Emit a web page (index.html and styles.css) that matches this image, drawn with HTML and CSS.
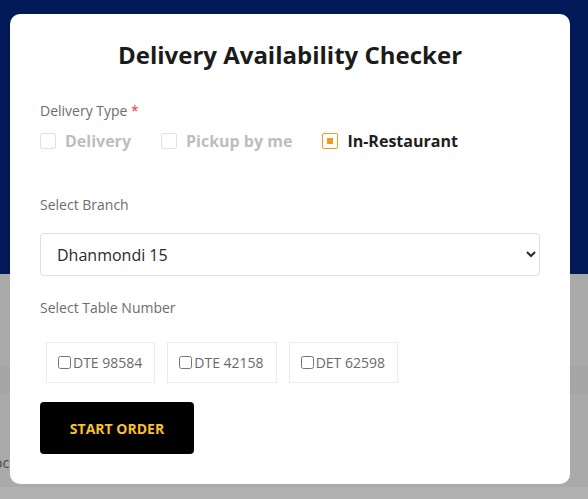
FILE: index.html
```html
<!DOCTYPE html>
<html lang="en">
<head>
  <meta charset="UTF-8">
  <meta name="viewport" content="width=device-width, initial-scale=1.0">
  <title>Delivery Availability Checker</title>
  <link rel="stylesheet" href="styles.css">
</head>
<body>

  <!-- Page behind the overlay -->
  <div class="page">
    <div class="page-header"></div>
    <div class="page-band"></div>
    <div class="page-band dark"></div>
    <div class="page-band text-band"><span class="page-text">oc</span></div>
    <div class="page-band light"></div>
  </div>

  <!-- Modal -->
  <div class="modal">
    <h2 class="modal-title">Delivery Availability Checker</h2>

    <div class="field-label">Delivery Type <span class="required">*</span></div>
    <div class="type-row">
      <label class="type-option">
        <span class="type-box"></span>
        <span>Delivery</span>
      </label>
      <label class="type-option">
        <span class="type-box"></span>
        <span>Pickup by me</span>
      </label>
      <label class="type-option active">
        <span class="type-box"></span>
        <span>In-Restaurant</span>
      </label>
    </div>

    <div class="field-label branch-label">Select Branch</div>
    <select class="branch-select">
      <option>Dhanmondi 15</option>
      <option>Gulshan 2</option>
      <option>Uttara</option>
    </select>

    <div class="field-label table-label">Select Table Number</div>
    <div class="table-list">
      <label class="table-item"><input type="checkbox">DTE 98584</label>
      <label class="table-item"><input type="checkbox">DTE 42158</label>
      <label class="table-item"><input type="checkbox">DET 62598</label>
    </div>

    <button class="start-btn">START ORDER</button>
  </div>

</body>
</html>
```

FILE: styles.css
```css
/* Base */
body {
  margin: 0;
  font-family: "Open Sans", "Liberation Sans", sans-serif;
  background-color: #a9a9a9;
}

/* Page behind the overlay */
.page {
  height: 499px;
  overflow: hidden;
}

.page-header {
  height: 274px;
  background-color: #011a57;
}

.page-band {
  height: 92px;
  background-color: #aaaaaa;
}

.page-band.dark {
  height: 28px;
  background-color: #a6a6a6;
}

.page-band.text-band {
  height: 93px;
  display: flex;
  align-items: flex-end;
}

.page-band.light {
  height: 12px;
  background-color: #b0b0b0;
}

.page-text {
  margin-left: -6px;
  margin-bottom: 14px;
  font-size: 14px;
  line-height: 20px;
  color: #4a4a4a;
}

/* Modal */
.modal {
  position: absolute;
  top: 14px;
  left: 10px;
  width: 500px;
  height: 445px;
  padding: 25px 30px 0;
  background-color: #fff;
  border-radius: 10px;
}

.modal-title {
  margin: 0 0 30px;
  text-align: center;
  font-size: 24px;
  line-height: 32px;
  font-weight: 700;
  color: #1b1b1b;
}

.field-label {
  font-size: 14px;
  line-height: 20px;
  color: #6d6d6d;
}

.required {
  color: #f03c3c;
}

/* Delivery type options */
.type-row {
  display: flex;
  gap: 30px;
  margin-top: 8px;
}

.type-option {
  display: flex;
  align-items: center;
  gap: 9px;
  font-size: 16px;
  line-height: 24px;
  font-weight: 700;
  color: #bdbdbd;
  cursor: pointer;
}

.type-box {
  width: 14px;
  height: 14px;
  border: 1px solid #e2e2e2;
  border-radius: 2px;
  display: flex;
  align-items: center;
  justify-content: center;
}

.type-option.active {
  color: #1e1e1e;
}

.type-option.active .type-box {
  border-color: #f39a1e;
}

.type-option.active .type-box::after {
  content: "";
  width: 6px;
  height: 6px;
  background-color: #f39a1e;
}

/* Branch select */
.branch-label {
  margin-top: 42px;
}

.branch-select {
  display: block;
  width: 500px;
  height: 43px;
  margin-top: 18px;
  padding: 0 10px 0 12px;
  border: 1px solid #dedede;
  border-radius: 4px;
  background-color: #fff;
  font-family: "Open Sans", "Liberation Sans", sans-serif;
  font-size: 16px;
  color: #2a2a2a;
}

/* Table numbers */
.table-label {
  margin-top: 22px;
}

.table-list {
  display: flex;
  margin-top: 18px;
}

.table-item {
  box-sizing: border-box;
  height: 41px;
  margin: 6px;
  padding: 0 12px 0 8px;
  border: 1px solid #ececec;
  font-size: 14px;
  line-height: 20px;
  color: #6a6a6a;
  display: flex;
  align-items: center;
}

.table-item input {
  margin: 0 2px 0 3px;
  width: 13px;
  height: 13px;
}

/* Start button */
.start-btn {
  margin-top: 13px;
  width: 154px;
  height: 52px;
  border: none;
  border-radius: 4px;
  background-color: #000;
  color: #f8c12c;
  font-family: "Open Sans", "Liberation Sans", sans-serif;
  font-size: 14px;
  font-weight: 700;
  cursor: pointer;
}
```
